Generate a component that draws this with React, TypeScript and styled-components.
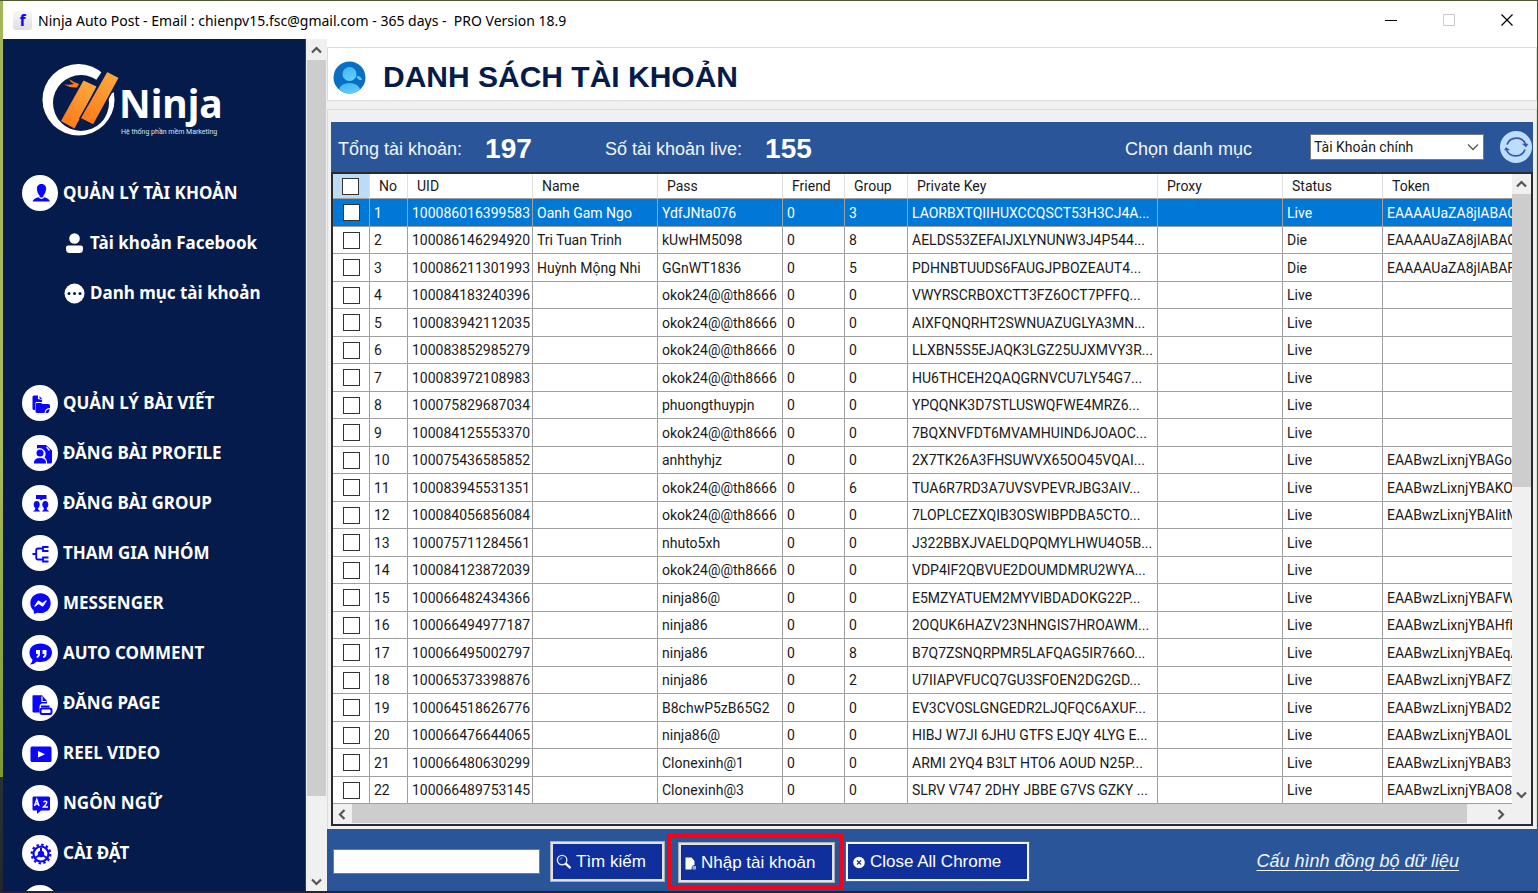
import React from 'react';
import styled, { createGlobalStyle, css } from 'styled-components';
import { FaFacebookMessenger } from 'react-icons/fa';

const SANS = '"Liberation Sans", Arial, sans-serif';
const GRID = 'Roboto, "Liberation Sans", sans-serif';
const UI = '"Noto Sans", "Open Sans", sans-serif';
const NAVY = '#051b4b';
const BLUE = '#2a5699';
const ICON = '#0a05ff';

const GlobalStyle = createGlobalStyle`
  * { box-sizing: border-box; }
  body { margin: 0; font-family: ${SANS}; color: #1a1a1a; }
  button, input, select { font-family: inherit; }
`;

const Desktop = styled.div`
  height: 100vh;
  padding: 0 0 2px 3px;
  background: linear-gradient(#a3b655 0, #a9bc5a 50%, #7f9a2c 87%, #2b3038 87%, #23262e 100%);
  border-top: 1px solid #4b5a2c;
  border-right: 1px solid #4b5a2c;
`;

const Window = styled.div`
  height: 100%;
  display: flex;
  flex-direction: column;
  background: #f0f0f0;
  overflow: hidden;
`;

const TitleBar = styled.header`
  flex: none;
  height: 38px;
  padding: 0 1px 0 10px;
  display: flex;
  align-items: center;
  background: #fff;
  color: #000;
  font-family: ${UI};
`;

const AppBadge = styled.span`
  width: 19px;
  height: 19px;
  margin-right: 6px;
  border-radius: 3px;
  background: linear-gradient(#f7f7f7, #dedede);
  color: #1a00f0;
  font: bold 16px/18px ${UI};
  text-align: center;
`;

const WindowTitle = styled.h1`
  flex: 1;
  margin: 0;
  font-size: 14px;
  font-weight: 400;
  white-space: pre;
`;

const CaptionButton = styled.button`
  width: 58px;
  height: 38px;
  padding: 0;
  border: 0;
  background: none;
  display: grid;
  place-items: center;
`;

const Body = styled.div`
  flex: 1;
  min-height: 0;
  display: flex;
`;

const Sidebar = styled.aside`
  flex: none;
  width: 303px;
  background: ${NAVY};
  border-right: 1px solid #2b3d66;
  overflow: hidden;
`;

const LogoBox = styled.div`
  height: 129px;
  padding: 21px 0 0 34px;
`;

const Menu = styled.nav`
  display: flex;
  flex-direction: column;
`;

const MenuGroup = styled.div`
  height: 210px;
  display: flex;
  flex-direction: column;
`;

const MenuLink = styled.a<{ $sub?: boolean }>`
  flex: none;
  height: 50px;
  padding-left: ${(p) => (p.$sub ? 60 : 19)}px;
  display: flex;
  align-items: center;
  gap: 5px;
  color: #fff;
  font: bold 17px/24px ${UI};
  text-decoration: none;
  white-space: nowrap;
`;

const Disc = styled.span`
  flex: none;
  width: 36px;
  height: 36px;
  border-radius: 50%;
  background: #fff;
  display: grid;
  place-items: center;
  color: ${ICON};
`;

const ScrollTrack = styled.div<{ $horizontal?: boolean; $size: number }>`
  flex: none;
  display: flex;
  background: #f0f0f0;
  ${(p) =>
    p.$horizontal
      ? css`
          flex-direction: row;
          height: ${p.$size}px;
          padding-bottom: 1px;
        `
      : css`
          flex-direction: column;
          align-items: stretch;
          width: ${p.$size}px;
        `}
`;

const MenuTrack = styled(ScrollTrack)`
  padding: 1px 1px 0;
`;

const ScrollArrow = styled.button`
  flex: none;
  width: 19px;
  height: 20px;
  padding: 0;
  border: 0;
  background: none;
  display: grid;
  place-items: center;
`;

const Thumb = styled.div<{ $share: number }>`
  flex: ${(p) => p.$share} 0 0;
  background: #cdcdcd;
`;

const Rest = styled.div<{ $share: number }>`
  flex: ${(p) => p.$share} 0 0;
`;

const Corner = styled.div`
  flex: none;
  width: 21px;
`;

const Main = styled.main`
  flex: 1;
  min-width: 0;
  display: flex;
  flex-direction: column;
  border-top: 8px solid #fff;
`;

const PageHeader = styled.div`
  flex: none;
  height: 54px;
  padding: 6px 0 0 5px;
  display: flex;
  align-items: center;
  gap: 17px;
  background: #fff;
  border: 1px solid #dcdcdc;
`;

const PageTitle = styled.h2`
  margin: 0;
  color: ${NAVY};
  font-size: 30px;
  line-height: 36px;
`;

const Panel = styled.section`
  flex: 1;
  min-height: 0;
  margin-top: 8px;
  padding: 12px 3px 3px 3px;
  display: flex;
  flex-direction: column;
  border: 1px solid #dcdcdc;
  border-bottom: 0;
`;

const StatsBar = styled.div`
  flex: none;
  height: 50px;
  padding: 4px 1px 0 7px;
  display: flex;
  align-items: center;
  background: ${BLUE};
  color: #f2f5fa;
  font-size: 18px;
`;

const Stat = styled.div<{ $width: number }>`
  width: ${(p) => p.$width}px;
  display: flex;
  align-items: center;
  gap: 23px;
  white-space: nowrap;
`;

const StatValue = styled.strong`
  color: #fff;
  font-size: 28px;
  line-height: 32px;
`;

const FilterLabel = styled.label`
  margin: 0 58px 0 auto;
`;

const SelectBox = styled.div`
  width: 174px;
  height: 26px;
  margin: 0 16px 4px 0;
  padding-right: 4px;
  display: flex;
  align-items: center;
  background: #fff;
  border: 1px solid #7a7a7a;
`;

const Select = styled.select`
  flex: 1;
  min-width: 0;
  padding: 0 0 0 3px;
  border: 0;
  appearance: none;
  background: none;
  color: #1a1a1a;
  font-family: ${GRID};
  font-size: 14px;
`;

const RefreshButton = styled.button`
  width: 32px;
  height: 32px;
  margin-bottom: 4px;
  padding: 0;
  border: 0;
  border-radius: 50%;
  background: #bbdefb;
`;

const GridFrame = styled.div`
  flex: 1;
  min-height: 0;
  display: flex;
  flex-direction: column;
  border: 2px solid #2b2b2b;
`;

const GridRow = styled.div`
  flex: 1;
  min-height: 0;
  display: flex;
`;

const GridViewport = styled.div`
  flex: 1;
  min-width: 0;
  overflow: hidden;
  background: #fff;
`;

const Table = styled.table`
  width: 1300px;
  table-layout: fixed;
  border-collapse: separate;
  border-spacing: 0;
  font-family: ${GRID};
  font-size: 14px;
  line-height: 16px;
`;

const HeadCell = styled.th<{ $picked?: boolean }>`
  height: 25px;
  padding: 0 0 0 9px;
  border-right: 1px solid #e0e0e0;
  border-bottom: 1px solid #a0a0a0;
  background: ${(p) => (p.$picked ? '#bcdcf4' : '#fff')};
  font-weight: 400;
  text-align: left;
`;

const Row = styled.tr<{ $selected?: boolean }>`
  height: 27px;
  background: ${(p) => (p.$selected ? '#0078d7' : '#fff')};
  color: ${(p) => (p.$selected ? '#fff' : '#1a1a1a')};
  &:nth-child(odd) {
    height: 28px;
  }
`;

const Cell = styled.td`
  padding: 0 0 0 4px;
  border-right: 1px solid #a0a0a0;
  border-bottom: 1px solid #a0a0a0;
  overflow: hidden;
  white-space: nowrap;
  &:first-child {
    padding-left: 10px;
  }
`;

const Check = styled.input`
  display: block;
  appearance: none;
  width: 17px;
  height: 17px;
  margin: 0;
  border: 1px solid #333;
  background: #fff;
`;

const Footer = styled.footer`
  flex: none;
  height: 62px;
  padding: 3px 78px 0 6px;
  display: flex;
  align-items: center;
  background: ${BLUE};
`;

const SearchInput = styled.input`
  width: 207px;
  height: 25px;
  margin-right: 10px;
  border: 1px solid #7a7a7a;
  background: #fff;
  font-size: 14px;
`;

const ActionButton = styled.button<{ $width: number; $focus?: boolean }>`
  width: ${(p) => p.$width}px;
  height: 41px;
  padding: 1px 0 0 2px;
  display: flex;
  align-items: center;
  gap: 4px;
  border: 1px solid ${(p) => (p.$focus ? '#0078d7' : '#adadad')};
  box-shadow: inset 0 0 0 2px ${(p) => (p.$focus ? '#f4f8ff' : '#e1e1e1')};
  background: #0f2f9c;
  color: #fff;
  font-size: 17px;
  white-space: nowrap;
  & > svg {
    flex: none;
    margin-left: 3px;
  }
`;

const Highlight = styled.div`
  margin: 0 2px;
  padding: 4px 4px 2px 7px;
  border: 4px solid #fa0012;
`;

const SyncLink = styled.a`
  margin-left: auto;
  color: #f2f5fa;
  font-size: 18px;
  font-style: italic;
  text-decoration: underline;
  text-underline-offset: 3px;
  white-space: nowrap;
`;

const Chevron = ({ turn }: { turn: number }) => (
  <svg width="11" height="11" viewBox="0 0 11 11" aria-hidden="true">
    <path d="M1 7.500 L5.500 3 L10 7.500" fill="none" stroke="#555" strokeWidth="2.200" transform={`rotate(${turn} 5.500 5.500)`} />
  </svg>
);

const Logo = () => (
  <svg width="200" height="82" viewBox="37 60 200 82" role="img" aria-label="Ninja">
    <defs>
      <linearGradient id="blade" x1="0" y1="1" x2="0.6" y2="0">
        <stop offset="0" stopColor="#ff7416" />
        <stop offset="1" stopColor="#fba63a" />
      </linearGradient>
    </defs>
    <path
      fillRule="evenodd"
      fill="#fff"
      d="M78.500 64 A36 35.700 0 1 0 78.500 135.400 A36 35.700 0 1 0 78.500 64 Z M81 75 A28 28 0 1 1 81 131 A28 28 0 1 1 81 75 Z"
    />
    <path d="M105.500 66 L124 76 L113 93 L91 88 Z" fill={NAVY} />
    <path d="M83.500 80.500 L96.500 86.500 L74.500 128.500 L61 121 Z" fill="url(#blade)" />
    <path d="M107 71 L119.500 77.700 L93.500 125.200 L80 118.300 Z" fill="url(#blade)" stroke={NAVY} strokeWidth="1.500" />
    <path d="M69 79 Q73 82 79 84 L77 87.500 Q70 88 64 84.500 Q70 85 74 84 Q70 82 69 79 Z" fill="#ff7a1a" />
    <text x="119" y="118" fill="#fff" fontFamily="Noto Sans, Open Sans, sans-serif" fontWeight="700" fontSize="39">
      Ninja
    </text>
    <text x="121" y="134" fill="#dfe3ee" fontFamily="Roboto, sans-serif" fontSize="7">
      Hệ thống phần mềm Marketing
    </text>
  </svg>
);

const Glyph = ({ children }: { children: React.ReactNode }) => (
  <svg width="36" height="36" viewBox="0 0 36 36" fill={ICON} aria-hidden="true">
    {children}
  </svg>
);

const icons: Record<string, React.ReactNode> = {
  user: (
    <Glyph>
      <path d="M19.500 9 C23 9 24.500 11.500 24 14.500 C23.700 17.500 22.500 19.500 21.500 20.500 L21.500 22 Q27 23 28 26.500 L10.500 26.500 Q11.500 23 17.500 22 L17.500 20.500 C16.500 19.500 15.200 17.500 15 14.500 C14.500 11.500 16 9 19.500 9 Z" />
      <path d="M17 22 Q19.500 24.500 22 22" fill="none" stroke="#fff" strokeWidth="1.200" />
    </Glyph>
  ),
  folders: (
    <Glyph>
      <path d="M10.500 12 Q10.500 10.500 12 10.500 L16 10.500 L16 14 L20 15 L20 17 L14 17 L13 19 L13 25 L12 25 Q10.500 25 10.500 23.500 Z" />
      <path d="M17.500 11 L20.500 14.500 L17.500 13.500 Z" />
      <path d="M13.500 19 Q13.500 18 15 18 L19 18 L20.500 19 L26.500 19 Q28 19 28 20.500 L28 23 Q23 23 22.500 28 L15.500 28 Q13.500 28 13.500 26.500 Z" />
      <path d="M23.500 28 Q24 24.500 27.500 24 Q27.500 27.500 25.500 28 Z" />
    </Glyph>
  ),
  profile: (
    <Glyph>
      <path d="M15 10 L24 10 L30 15.500 L30 27 Q30 28.500 28.500 28.500 L25 28.500 Q25.500 25 22.500 22.500 Q25 18.500 22 15 Q19 12 15 13.500 Z" />
      <circle cx="18" cy="18" r="3.500" />
      <path d="M12 28.500 Q11.500 23 18 23 Q24.500 23 24 28.500 Z" />
      <path d="M24.500 12 L27.500 15.500" stroke="#fff" strokeWidth="1.200" />
    </Glyph>
  ),
  group: (
    <Glyph>
      <path d="M14 10 H24.500 V14 H21 L19 15.500 L17.500 14 H14 Z" />
      <ellipse cx="14.700" cy="19.500" rx="3" ry="3.500" />
      <ellipse cx="23.300" cy="19.500" rx="3" ry="3.500" />
      <path d="M13.200 22 H16.200 V24.500 L18.500 26.500 H11 L13.200 24.500 Z M21.800 22 H24.800 V24.500 L27.300 26.500 H19.800 L21.800 24.500 Z" />
    </Glyph>
  ),
  tree: (
    <Glyph>
      <path
        d="M10.500 19 H14 M21 13.500 H16 Q14.200 13.500 14.200 15.500 V22.500 Q14.200 24.500 16 24.500 H21 M26.500 12 H21 V16 H26.500 M26.500 22.500 H21 V26.500 H26.500"
        fill="none"
        stroke={ICON}
        strokeWidth="1.800"
      />
    </Glyph>
  ),
  quote: (
    <Glyph>
      <path d="M18.500 8.500 C25 8.500 30 12 30 17.500 C30 23 25 27 18.500 27 Q16.500 27 15 26.500 Q12 29.500 8 29.500 Q10.500 27.500 10.500 24.500 Q7.500 22 7.500 17.500 C7.500 12 12 8.500 18.500 8.500 Z" />
      <path d="M14 15 H18 V19 Q18 22 14.800 23 L14.500 21.500 Q16 20.500 16 19 H14 Z M20.500 15 H24.500 V19 Q24.500 22 21.300 23 L21 21.500 Q22.500 20.500 22.500 19 H20.500 Z" fill="#fff" />
    </Glyph>
  ),
  page: (
    <Glyph>
      <path d="M10.500 11 Q10.500 10.300 11.500 10.300 H20 L25 16 V18.500 H20 Q17.500 19 17.500 22 V27.500 H11.500 Q10.500 27.500 10.500 26.500 Z" />
      <path d="M20 11.500 V16.500 H24.500" fill="none" stroke="#fff" strokeWidth="1.200" />
      <path d="M19 20.500 H27.500 V22.500 H19 Z" />
      <rect x="18.500" y="23.500" width="11" height="5.500" rx="1.800" fill="#fff" stroke={ICON} strokeWidth="2" />
    </Glyph>
  ),
  video: (
    <Glyph>
      <rect x="8.500" y="11.500" width="21" height="15.500" rx="1.500" />
      <path d="M16 16 L23 19.300 L16 22.500 Z" fill="#fff" />
    </Glyph>
  ),
  language: (
    <Glyph>
      <path d="M11.500 11.500 H26.500 Q28 11.500 28 13 V24 Q28 25.500 26.500 25.500 H19 L15 29 V25.500 H11.500 Q10.500 25.500 10.500 24 V13 Q10.500 11.500 11.500 11.500 Z" />
      <path d="M12.500 21 L14.800 14.500 L17 21 M13.300 19 H16.300 M21.500 17 Q23.500 15.300 24.700 17 Q25 18.500 21.500 22 H26" fill="none" stroke="#fff" strokeWidth="1.500" />
    </Glyph>
  ),
  gear: (
    <Glyph>
      <circle cx="19" cy="19" r="7.500" fill="none" stroke={ICON} strokeWidth="2.200" />
      <circle cx="19" cy="19" r="9.300" fill="none" stroke={ICON} strokeWidth="2.200" strokeDasharray="2.430 2.430" />
      <path d="M19 12.500 L19 19 L13 23 M19 19 L25 23" fill="none" stroke={ICON} strokeWidth="2" />
      <circle cx="19" cy="19" r="3.200" />
    </Glyph>
  ),
  messenger: <FaFacebookMessenger size={21} />,
};

const subIcons = {
  person: (
    <svg width="22" height="22" viewBox="0 0 22 22" fill="#fff" aria-hidden="true">
      <circle cx="11.500" cy="6.500" r="5.300" />
      <path d="M5 13.500 H18 Q20 13.500 20 15.500 V17 Q20 21 16.500 21 H6.500 Q3 21 3 17 V15.500 Q3 13.500 5 13.500 Z" />
    </svg>
  ),
  dots: (
    <svg width="22" height="22" viewBox="0 0 22 22" aria-hidden="true">
      <circle cx="11.500" cy="11.500" r="10" fill="#fff" />
      <g fill={NAVY}>
        <circle cx="6" cy="11.500" r="1.500" />
        <circle cx="11.500" cy="11.500" r="1.500" />
        <circle cx="17" cy="11.500" r="1.500" />
      </g>
    </svg>
  ),
};

const menu: [string, React.ReactNode][] = [
  ['QUẢN LÝ BÀI VIẾT', icons.folders],
  ['ĐĂNG BÀI PROFILE', icons.profile],
  ['ĐĂNG BÀI GROUP', icons.group],
  ['THAM GIA NHÓM', icons.tree],
  ['MESSENGER', icons.messenger],
  ['AUTO COMMENT', icons.quote],
  ['ĐĂNG PAGE', icons.page],
  ['REEL VIDEO', icons.video],
  ['NGÔN NGỮ', icons.language],
  ['CÀI ĐẶT', icons.gear],
  ['', null],
];

const columns: [string, number][] = [
  ['No', 38],
  ['UID', 125],
  ['Name', 125],
  ['Pass', 125],
  ['Friend', 62],
  ['Group', 63],
  ['Private Key', 250],
  ['Proxy', 125],
  ['Status', 100],
  ['Token', 250],
];

const T = 'EAABwzLixnjYBA';
// uid, name, password, group, private key, status, token
const accounts: string[][] = [
  ['100086016399583', 'Oanh Gam Ngo', 'YdfJNta076', '3', 'LAORBXTQIIHUXCCQSCT53H3CJ4A...', 'Live', 'EAAAAUaZA8jlABAO'],
  ['100086146294920', 'Tri Tuan Trinh', 'kUwHM5098', '8', 'AELDS53ZEFAIJXLYNUNW3J4P544...', 'Die', 'EAAAAUaZA8jlABAO'],
  ['100086211301993', 'Huỳnh Mộng Nhi', 'GGnWT1836', '5', 'PDHNBTUUDS6FAUGJPBOZEAUT4...', 'Die', 'EAAAAUaZA8jlABAF'],
  ['100084183240396', '', 'okok24@@th8666', '0', 'VWYRSCRBOXCTT3FZ6OCT7PFFQ...', 'Live', ''],
  ['100083942112035', '', 'okok24@@th8666', '0', 'AIXFQNQRHT2SWNUAZUGLYA3MN...', 'Live', ''],
  ['100083852985279', '', 'okok24@@th8666', '0', 'LLXBN5S5EJAQK3LGZ25UJXMVY3R...', 'Live', ''],
  ['100083972108983', '', 'okok24@@th8666', '0', 'HU6THCEH2QAQGRNVCU7LY54G7...', 'Live', ''],
  ['100075829687034', '', 'phuongthuypjn', '0', 'YPQQNK3D7STLUSWQFWE4MRZ6...', 'Live', ''],
  ['100084125553370', '', 'okok24@@th8666', '0', '7BQXNVFDT6MVAMHUIND6JOAOC...', 'Live', ''],
  ['100075436585852', '', 'anhthyhjz', '0', '2X7TK26A3FHSUWVX65OO45VQAI...', 'Live', T + 'Goo'],
  ['100083945531351', '', 'okok24@@th8666', '6', 'TUA6R7RD3A7UVSVPEVRJBG3AIV...', 'Live', T + 'KO'],
  ['100084056856084', '', 'okok24@@th8666', '0', '7LOPLCEZXQIB3OSWIBPDBA5CTO...', 'Live', T + 'IitM'],
  ['100075711284561', '', 'nhuto5xh', '0', 'J322BBXJVAELDQPQMYLHWU4O5B...', 'Live', ''],
  ['100084123872039', '', 'okok24@@th8666', '0', 'VDP4IF2QBVUE2DOUMDMRU2WYA...', 'Live', ''],
  ['100066482434366', '', 'ninja86@', '0', 'E5MZYATUEM2MYVIBDADOKG22P...', 'Live', T + 'FW'],
  ['100066494977187', '', 'ninja86', '0', '2OQUK6HAZV23NHNGIS7HROAWM...', 'Live', T + 'Hfb'],
  ['100066495002797', '', 'ninja86', '8', 'B7Q7ZSNQRPMR5LAFQAG5IR766O...', 'Live', T + 'EqA'],
  ['100065373398876', '', 'ninja86', '2', 'U7IIAPVFUCQ7GU3SFOEN2DG2GD...', 'Live', T + 'FZB'],
  ['100064518626776', '', 'B8chwP5zB65G2', '0', 'EV3CVOSLGNGEDR2LJQFQC6AXUF...', 'Live', T + 'D2s'],
  ['100066476644065', '', 'ninja86@', '0', 'HIBJ W7JI 6JHU GTFS EJQY 4LYG E...', 'Live', T + 'OLz'],
  ['100066480630299', '', 'Clonexinh@1', '0', 'ARMI 2YQ4 B3LT HTO6 AOUD N25P...', 'Live', T + 'B3p'],
  ['100066489753145', '', 'Clonexinh@3', '0', 'SLRV V747 2DHY JBBE G7VS GZKY ...', 'Live', T + 'O8s'],
];

export default function App() {
  return (
    <Desktop>
      <GlobalStyle />
      <Window>
        <TitleBar>
          <AppBadge>f</AppBadge>
          <WindowTitle>{'Ninja Auto Post - Email : chienpv15.fsc@gmail.com - 365 days -  PRO Version 18.9'}</WindowTitle>
          <CaptionButton aria-label="Minimize">
            <svg width="12" height="12"><path d="M0 6.500 H12" stroke="#000" /></svg>
          </CaptionButton>
          <CaptionButton aria-label="Maximize" disabled>
            <svg width="12" height="12"><path d="M.5 .5 H11.500 V11.500 H.5 Z" fill="none" stroke="#ccc" /></svg>
          </CaptionButton>
          <CaptionButton aria-label="Close">
            <svg width="12" height="12"><path d="M.5 .5 L11.500 11.500 M11.500 .5 L.5 11.500" stroke="#000" strokeWidth="1.200" /></svg>
          </CaptionButton>
        </TitleBar>
        <Body>
          <Sidebar>
            <LogoBox>
              <Logo />
            </LogoBox>
            <Menu>
              <MenuGroup>
                <MenuLink href="#accounts"><Disc>{icons.user}</Disc>QUẢN LÝ TÀI KHOẢN</MenuLink>
                <MenuLink href="#facebook" $sub>{subIcons.person}Tài khoản Facebook</MenuLink>
                <MenuLink href="#categories" $sub>{subIcons.dots}Danh mục tài khoản</MenuLink>
              </MenuGroup>
              {menu.map(([label, icon], i) => (
                <MenuLink key={i} href={`#menu-${i}`}>
                  <Disc>{icon}</Disc>
                  {label}
                </MenuLink>
              ))}
            </Menu>
          </Sidebar>
          <MenuTrack $size={21}>
            <ScrollArrow aria-label="Scroll menu up"><Chevron turn={0} /></ScrollArrow>
            <Thumb $share={736} />
            <Rest $share={75} />
            <ScrollArrow aria-label="Scroll menu down"><Chevron turn={180} /></ScrollArrow>
          </MenuTrack>
          <Main>
            <PageHeader>
              <svg width="33" height="33" viewBox="0 0 33 33" aria-hidden="true">
                <defs>
                  <linearGradient id="face" x1="0" y1="0" x2="0.5" y2="1">
                    <stop offset="0" stopColor="#3fb2f0" />
                    <stop offset="1" stopColor="#5fd0fb" />
                  </linearGradient>
                  <clipPath id="round"><circle cx="16.500" cy="16.500" r="16" /></clipPath>
                </defs>
                <circle cx="16.500" cy="16.500" r="16" fill="#0a6fc4" />
                <g clipPath="url(#round)" fill="url(#face)">
                  <circle cx="16.500" cy="13" r="7" />
                  <path d="M5.500 29 Q8 22 16.500 22 Q25 22 27.500 29 L23 34 H10 Z" />
                  <path d="M23.500 15 Q27 14 29 19 Q24 19.500 23.500 15 Z" />
                </g>
              </svg>
              <PageTitle>DANH SÁCH TÀI KHOẢN</PageTitle>
            </PageHeader>
            <Panel>
              <StatsBar>
                <Stat $width={267}>Tổng tài khoản:<StatValue>197</StatValue></Stat>
                <Stat $width={220}>Số tài khoản live:<StatValue>155</StatValue></Stat>
                <FilterLabel htmlFor="category">Chọn danh mục</FilterLabel>
                <SelectBox>
                  <Select id="category" defaultValue="main">
                    <option value="main">Tài Khoản chính</option>
                  </Select>
                  <svg width="12" height="8" aria-hidden="true"><path d="M1 1.500 L6 6.500 L11 1.500" fill="none" stroke="#555" strokeWidth="1.300" /></svg>
                </SelectBox>
                <RefreshButton aria-label="Refresh">
                  <svg width="32" height="32" viewBox="0 0 32 32" fill="none" stroke="#3f51b5" strokeWidth="1.700">
                    <path d="M7 13.500 A10 10 0 0 1 25.500 13 M25 18.500 A10 10 0 0 1 6.500 19" />
                    <path d="M22.500 13 L28 13 L26 16 Z M9.500 19 L4.500 19 L6 16.500 Z" fill="#3f51b5" strokeWidth="0.500" />
                  </svg>
                </RefreshButton>
              </StatsBar>
              <GridFrame>
                <GridRow>
                  <GridViewport>
                    <Table>
                      <colgroup>
                        <col style={{ width: 37 }} />
                        {columns.map(([name, width]) => (
                          <col key={name} style={{ width }} />
                        ))}
                      </colgroup>
                      <thead>
                        <tr>
                          <HeadCell $picked><Check type="checkbox" aria-label="Select all accounts" /></HeadCell>
                          {columns.map(([name]) => (
                            <HeadCell key={name}>{name}</HeadCell>
                          ))}
                        </tr>
                      </thead>
                      <tbody>
                        {accounts.map(([uid, name, pass, group, key, status, token], i) => (
                          <Row key={uid} $selected={i === 0}>
                            <Cell><Check type="checkbox" aria-label={`Select account ${i + 1}`} /></Cell>
                            <Cell>{i + 1}</Cell>
                            <Cell>{uid}</Cell>
                            <Cell>{name}</Cell>
                            <Cell>{pass}</Cell>
                            <Cell>0</Cell>
                            <Cell>{group}</Cell>
                            <Cell>{key}</Cell>
                            <Cell />
                            <Cell>{status}</Cell>
                            <Cell>{token}</Cell>
                          </Row>
                        ))}
                      </tbody>
                    </Table>
                  </GridViewport>
                  <ScrollTrack $size={19}>
                    <ScrollArrow aria-label="Scroll up"><Chevron turn={0} /></ScrollArrow>
                    <Thumb $share={293} />
                    <Rest $share={297} />
                    <ScrollArrow aria-label="Scroll down"><Chevron turn={180} /></ScrollArrow>
                  </ScrollTrack>
                </GridRow>
                <ScrollTrack $horizontal $size={20}>
                  <ScrollArrow aria-label="Scroll left"><Chevron turn={-90} /></ScrollArrow>
                  <Thumb $share={1114} />
                  <Rest $share={24} />
                  <ScrollArrow aria-label="Scroll right"><Chevron turn={90} /></ScrollArrow>
                  <Corner />
                </ScrollTrack>
              </GridFrame>
            </Panel>
            <Footer>
              <SearchInput aria-label="Tìm kiếm tài khoản" />
              <ActionButton $width={115}>
                <svg width="16" height="16" viewBox="0 0 17 17" fill="none" aria-hidden="true">
                  <circle cx="6.500" cy="6.500" r="5" stroke="#dfe6f5" strokeWidth="1.500" />
                  <path d="M10 10 L15.500 15" stroke="#fff" strokeWidth="2.400" />
                  <path d="M4 6.500 Q4.500 4 7 4" stroke="#8fa5dc" />
                </svg>
                Tìm kiếm
              </ActionButton>
              <Highlight>
                <ActionButton $width={157}>
                  <svg width="13" height="13" viewBox="0 0 13 13" aria-hidden="true">
                    <path d="M1.500 .5 H7.500 L10.500 4 V8 Q7.500 8 7.500 12.500 H1.500 Z" fill="#fff" />
                    <path d="M8.500 9 H12 V12.500 H8.500 Z" fill="#9fb0dd" />
                  </svg>
                  Nhập tài khoản
                </ActionButton>
              </Highlight>
              <ActionButton $width={185} $focus>
                <svg width="15" height="13" viewBox="0 0 15 13" aria-hidden="true">
                  <circle cx="8" cy="6.500" r="5.800" fill="#fff" />
                  <path d="M6 4.500 L10 8.500 M10 4.500 L6 8.500" stroke="#0f2f9c" strokeWidth="1.200" />
                </svg>
                Close All Chrome
              </ActionButton>
              <SyncLink href="#sync">Cấu hình đồng bộ dữ liệu</SyncLink>
            </Footer>
          </Main>
        </Body>
      </Window>
    </Desktop>
  );
}
